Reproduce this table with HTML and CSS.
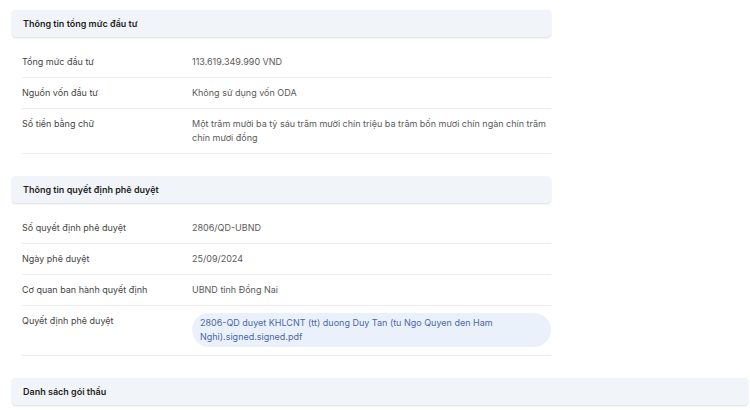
FILE: index.html
```html
<!DOCTYPE html>
<html lang="vi">
<head>
    <meta charset="UTF-8">
    <meta name="viewport" content="width=device-width, initial-scale=1.0">
    <title>Thông tin dự án</title>
    <link rel="stylesheet" href="styles.css">
</head>
<body>
    <div class="page">
        <div class="section">
            <div class="section-title">Thông tin tổng mức đầu tư</div>
            <div class="rows">
                <div class="row">
                    <div class="label">Tổng mức đầu tư</div>
                    <div class="value">113.619.349.990 VND</div>
                </div>
                <div class="row">
                    <div class="label">Nguồn vốn đầu tư</div>
                    <div class="value">Không sử dụng vốn ODA</div>
                </div>
                <div class="row">
                    <div class="label">Số tiền bằng chữ</div>
                    <div class="value">Một trăm mười ba tỷ sáu trăm mười chín triệu ba trăm bốn mươi chín ngàn chín trăm chín mươi đồng</div>
                </div>
            </div>
        </div>

        <div class="section">
            <div class="section-title">Thông tin quyết định phê duyệt</div>
            <div class="rows">
                <div class="row">
                    <div class="label">Số quyết định phê duyệt</div>
                    <div class="value">2806/QD-UBND</div>
                </div>
                <div class="row">
                    <div class="label">Ngày phê duyệt</div>
                    <div class="value">25/09/2024</div>
                </div>
                <div class="row">
                    <div class="label">Cơ quan ban hành quyết định</div>
                    <div class="value">UBND tỉnh Đồng Nai</div>
                </div>
                <div class="row">
                    <div class="label">Quyết định phê duyệt</div>
                    <div class="value">
                        <a class="file" href="#">2806-QD duyet KHLCNT (tt) duong Duy Tan (tu Ngo Quyen den Ham Nghi).signed.signed.pdf</a>
                    </div>
                </div>
            </div>
        </div>

        <div class="section wide">
            <div class="section-title">Danh sách gói thầu</div>
        </div>
    </div>
</body>
</html>
```

FILE: styles.css
```css
body {
    font-family: Inter, "Noto Sans", sans-serif;
    font-size: 9px;
    line-height: 14px;
    color: #3a3a3a;
    background-color: #ffffff;
    margin: 0;
    padding: 10px 2px 0 12px;
}
.section {
    width: 539px;
    margin-bottom: 22px;
}
.section.wide {
    width: 736px;
}
.section-title {
    height: 27px;
    line-height: 27px;
    padding: 0 11px;
    background-color: #f1f4f8;
    border-radius: 4px;
    box-shadow: 0 1px 2px rgba(0, 0, 0, 0.14);
    font-weight: 600;
    color: #1f1f1f;
}
.rows {
    margin-top: 10px;
    padding-left: 10px;
}
.row {
    display: grid;
    grid-template-columns: 170px 1fr;
    padding: 8px 0;
    border-bottom: 1px solid #ececec;
}
.label {
    color: #444444;
}
.value {
    color: #5a5a5a;
}
.file {
    display: block;
    margin-top: -1px;
    padding: 3px 8px;
    background-color: #eaf1fb;
    border-radius: 17px;
    color: #4c68a6;
    text-decoration: none;
}
```
